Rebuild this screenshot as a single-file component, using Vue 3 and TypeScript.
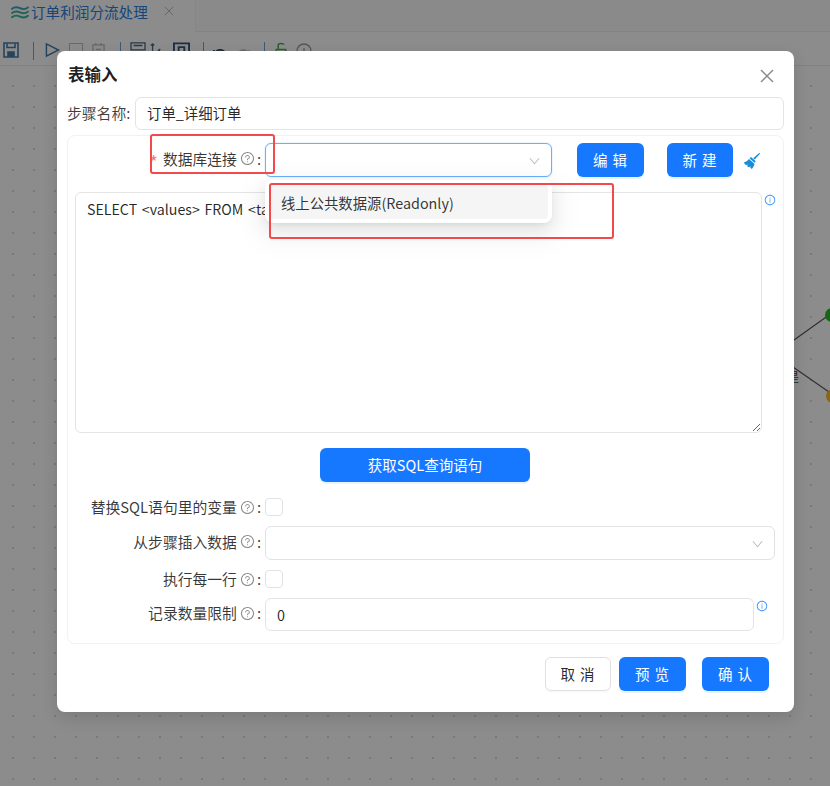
<script setup lang="ts">
const help = [
  'M512 64C264.6 64 64 264.6 64 512s200.6 448 448 448 448-200.6 448-448S759.4 64 512 64zm0 820c-205.4 0-372-166.6-372-372s166.6-372 372-372 372 166.6 372 372-166.6 372-372 372z',
  'M623.6 316.7C593.6 290.4 554 276 512 276s-81.6 14.5-111.6 40.7C369.2 344 352 380.7 352 420v7.6c0 4.4 3.6 8 8 8h48c4.4 0 8-3.6 8-8V420c0-44.1 43.1-80 96-80s96 35.9 96 80c0 31.1-22 59.6-56.1 72.7-21.2 8.1-39.2 22.3-52.1 40.9-13.1 19-19.9 41.8-19.9 64.9V620c0 4.4 3.6 8 8 8h48c4.4 0 8-3.6 8-8v-22.7a48.3 48.3 0 0 1 30.9-44.8c59-22.7 97.1-74.7 97.1-132.5.1-39.3-17.1-76-48.3-103.3zM472 732a40 40 0 1 0 80 0 40 40 0 1 0-80 0z'
].join(' ')
const circle = 'M512 64C264.6 64 64 264.6 64 512s200.6 448 448 448 448-200.6 448-448S759.4 64 512 64zm0 820c-205.4 0-372-166.6-372-372s166.6-372 372-372 372 166.6 372 372-166.6 372-372 372z'
const info = circle + ' M464 336a48 48 0 1 0 96 0 48 48 0 1 0-96 0zm72 112h-48c-4.4 0-8 3.6-8 8v272c0 4.4 3.6 8 8 8h48c4.4 0 8-3.6 8-8V456c0-4.4-3.6-8-8-8z'
const sql = 'SELECT <values> FROM <table name> WHERE <conditions>'
</script>

<template>
  <div class="page">
    <header class="tabs">
      <svg class="logo" viewBox="0 0 18 13" fill="none" stroke-width="1.900" stroke-linecap="round">
        <path d="M1 2.800C3.500 .8 6 .8 9 2.200s5.500 1.400 8-.8" stroke="#35a8c0" />
        <path d="M1 7C3.500 5 6 5 9 6.400s5.500 1.400 8-.8" stroke="#35b8a0" />
        <path d="M1 11.200C3.500 9.200 6 9.200 9 10.600s5.500 1.400 8-.8" stroke="#35b8a0" />
      </svg>
      <span class="tab-title">订单利润分流处理</span>
      <svg class="tab-close" viewBox="0 0 12 12" stroke="#bdbdbd" stroke-width="1.2"><path d="M1 1l10 10M11 1L1 11" /></svg>
      <div class="tab-rest"></div>
    </header>
    <nav class="toolbar">
      <svg class="tool save" viewBox="0 0 16 16" fill="none" stroke="#4a7ca8" stroke-width="1.6">
        <path d="M1 1h14v14H1z" /><path d="M4 1.500v4h8v-4" /><path d="M5 15v-5h6v5" fill="#4a7ca8" />
      </svg>
      <i class="sep"></i>
      <svg class="tool play" viewBox="0 0 16 16" fill="none" stroke="#3f78a8" stroke-width="1.5"><path d="M1.500 1.500v13l13-6.500z" /></svg>
      <span class="box"></span>
      <svg class="tool cal" viewBox="0 0 14 16" fill="none" stroke="#bdbdbd" stroke-width="1.4"><path d="M1 3h12v12H1zM4 1v3M10 1v3M4 8h6" /></svg>
      <i class="sep"></i>
      <svg class="tool wide" viewBox="0 0 18 16" fill="none" stroke="#4a6a88" stroke-width="1.5"><path d="M1 1h16v8H1zM4 4h10" /></svg>
      <svg class="tool slim" viewBox="0 0 14 16" fill="none" stroke="#4a6a88" stroke-width="1.5"><path d="M3 15V2M1 4l2-2 2 2M11 15V8M9 10l3-2" /></svg>
      <svg class="tool wide2" viewBox="0 0 18 16" fill="none" stroke="#38587a" stroke-width="2"><path d="M1 1h16v14H1zM6 12V5h6v7" /></svg>
      <i class="sep sep-b"></i>
      <svg class="tool undo" viewBox="0 0 16 16" fill="none" stroke="#3a4a5a" stroke-width="1.8"><path d="M2 10c2-6 9-7 12-1M2 5v5h5" /></svg>
      <svg class="tool redo" viewBox="0 0 16 16" fill="none" stroke="#bdbdbd" stroke-width="1.8"><path d="M14 10C12 4 5 3 2 9M14 5v5H9" /></svg>
      <i class="sep sep-c"></i>
      <svg class="tool lock" viewBox="0 0 12 16" fill="none" stroke="#4caf50" stroke-width="1.6"><path d="M1 8h10v7H1zM3 8V3c0-2 6-2 6 0" /></svg>
      <svg class="tool shape" viewBox="0 0 16 16" fill="none" stroke="#9a9a9a" stroke-width="1.3"><circle cx="8" cy="8" r="7" /><path d="M8 5v6" /></svg>
    </nav>
    <main class="canvas">
      <svg class="edges" width="830" height="786" viewBox="0 0 830 786" fill="none">
        <path d="M780 350L829 315M780 358L829 392" stroke="#555" stroke-width="1.1" />
        <circle cx="832" cy="315" r="7" fill="#1fbf1f" />
        <circle cx="833" cy="396" r="7" fill="#ffb81c" />
      </svg>
      <span class="edge-label">是</span>
    </main>

    <div class="mask"></div>

    <section class="modal">
      <div class="modal-head">
        <h2>表输入</h2>
        <svg class="close" viewBox="0 0 14 14" stroke="#8c8c8c" stroke-width="1.5"><path d="M1 1l12 12M13 1L1 13" /></svg>
      </div>
      <div class="name-row">
        <label>步骤名称:</label>
        <input class="field name" value="订单_详细订单" />
      </div>
      <div class="panel">
        <div class="row conn">
          <div class="label"><em>*</em>数据库连接<svg class="help" viewBox="0 0 1024 1024"><path :d="help" /></svg>:</div>
          <div class="select focus">
            <svg class="chev" viewBox="0 0 12 8" fill="none" stroke="#bfbfbf" stroke-width="1.2"><path d="M1 1l5 6 5-6" /></svg>
            <div class="dropdown"><div class="option">线上公共数据源(Readonly)</div></div>
          </div>
          <button class="btn primary edit">编 辑</button>
          <button class="btn primary create">新 建</button>
          <svg class="broom" viewBox="0 0 16 16" fill="#1a8cd8">
            <path d="M15.500.8l.5.8-5 5.400-1.400-1.200z" />
            <path d="M7.500 4.800l4.500 4-1 1.400-4.800-4.200z" />
            <path d="M5.600 6.600l5.200 4.400c-.4 2-1.400 3.800-2.600 5l-1.400-1.400.2-1.400-1.400 1.400-1.800-1.400.8-1.600-1.800.8-2.200-2.600c2-.4 3.800-1.600 5-3.200z" />
          </svg>
        </div>
        <div class="sql-row">
          <textarea class="sql" :value="sql"></textarea>
          <svg class="info" viewBox="0 0 1024 1024"><path :d="info" /></svg>
        </div>
        <div class="get-row"><button class="btn primary get">获取SQL查询语句</button></div>
        <div class="row check-row first">
          <div class="label">替换SQL语句里的变量<svg class="help" viewBox="0 0 1024 1024"><path :d="help" /></svg>:</div>
          <span class="check"></span>
        </div>
        <div class="row spaced">
          <div class="label">从步骤插入数据<svg class="help" viewBox="0 0 1024 1024"><path :d="help" /></svg>:</div>
          <div class="select wide-select">
            <svg class="chev" viewBox="0 0 12 8" fill="none" stroke="#bfbfbf" stroke-width="1.2"><path d="M1 1l5 6 5-6" /></svg>
          </div>
        </div>
        <div class="row spaced check-row">
          <div class="label">执行每一行<svg class="help" viewBox="0 0 1024 1024"><path :d="help" /></svg>:</div>
          <span class="check"></span>
        </div>
        <div class="row spaced">
          <div class="label">记录数量限制<svg class="help" viewBox="0 0 1024 1024"><path :d="help" /></svg>:</div>
          <input class="field limit" value="0" />
          <svg class="info info-b" viewBox="0 0 1024 1024"><path :d="info" /></svg>
        </div>
      </div>
      <footer class="foot">
        <button class="btn cancel">取 消</button>
        <button class="btn primary preview">预 览</button>
        <button class="btn primary confirm">确 认</button>
      </footer>
    </section>

    <div class="mark mark-a"></div>
    <div class="mark mark-b"></div>
  </div>
</template>

<style>
html, body { margin: 0; background: #fff; }
</style>

<style scoped>
.page {
  position: relative;
  width: 830px;
  height: 786px;
  overflow: hidden;
  display: flex;
  flex-direction: column;
  font-family: "Noto Sans CJK SC", "Noto Sans", sans-serif;
  font-size: 14px;
  color: rgba(0, 0, 0, .85);
}
.tabs {
  height: 32px;
  display: flex;
  align-items: center;
  padding: 0 0 8px 11px;
  box-sizing: border-box;
  flex: none;
}
.logo { width: 18px; height: 13px; margin-right: 2px; flex: none; }
.tab-title { font-size: 14.6px; color: #2a7fe0; white-space: nowrap; line-height: 24px; }
.tab-close { width: 10px; height: 10px; margin-left: 16px; margin-top: -2px; flex: none; }
.tab-rest { flex: 1; align-self: stretch; margin: 0 0 -8px 21px; background: #fbfbfb; border-left: 1px solid #f2f2f2; border-bottom: 1px solid #f0f0f0; }
.toolbar {
  height: 34px;
  flex: none;
  display: flex;
  align-items: flex-start;
  box-sizing: border-box;
  padding: 10px 0 0 3px;
  background: #fff;
  border-bottom: 1px solid #ececec;
  box-shadow: 0 1px 2px rgba(0, 0, 0, .06);
}
.tool { flex: none; }
.save { width: 16px; height: 16px; }
.sep { width: 1px; height: 18px; margin: 0 0 0 14px; background: #6aa7dc; flex: none; }
.play { width: 15px; height: 16px; margin-left: 11px; }
.box { width: 14px; height: 15px; margin: 1px 0 0 9px; border: 1.5px solid #bdbdbd; box-sizing: border-box; flex: none; }
.cal { width: 13px; height: 15px; margin-left: 9px; }
.toolbar .cal + .sep { margin-left: 15px; }
.wide { width: 18px; height: 14px; margin-left: 8px; }
.slim { width: 12px; height: 14px; margin-left: 3px; }
.wide2 { width: 17px; height: 16px; margin-left: 11px; }
.sep-b { margin-left: 13px; }
.undo { width: 16px; height: 16px; margin: 3px 0 0 8px; }
.redo { width: 15px; height: 16px; margin: 3px 0 0 8px; }
.sep-c { margin-left: 13px; }
.lock { width: 12px; height: 15px; margin-left: 10px; }
.shape { width: 16px; height: 16px; margin: 1px 0 0 9px; }
.canvas {
  flex: 1;
  background-color: #fff;
  background-image: radial-gradient(circle at 1px 1px, #dcdcdc 1px, transparent 1.2px);
  background-size: 21px 21px;
  background-position: 12px 19px;
}
.edges { position: absolute; left: 0; top: 0; }
.edge-label { position: absolute; left: 787px; top: 368px; font-size: 12px; line-height: 18px; color: #444; }
.mask { position: absolute; inset: 0; background: rgba(0, 0, 0, .45); }

.modal {
  position: absolute;
  left: 57px;
  top: 51px;
  width: 737px;
  height: 661px;
  box-sizing: border-box;
  padding: 0 10px;
  background: #fff;
  border-radius: 8px;
  box-shadow: 0 6px 16px rgba(0, 0, 0, .12);
  display: flex;
  flex-direction: column;
}
.modal-head { height: 46px; display: flex; align-items: center; justify-content: space-between; flex: none; }
.modal-head h2 { margin: 0 0 0 1px; font-size: 16.5px; font-weight: 700; line-height: 24px; color: rgba(0, 0, 0, .88); }
.close { width: 14px; height: 14px; margin-right: 10px; margin-top: 4px; }
.name-row { display: flex; align-items: center; gap: 3px; flex: none; }
.name-row label { font-size: 14.8px; white-space: nowrap; width: 65px; padding-bottom: 2px; color: rgba(0, 0, 0, .75); }
.field {
  height: 33px;
  box-sizing: border-box;
  flex: 1;
  min-width: 0;
  padding: 0 11px;
  border: 1px solid #e4e4e4;
  border-radius: 6px;
  font: inherit;
  font-size: 14.4px;
  color: rgba(0, 0, 0, .85);
  outline: none;
  background: #fff;
}
.name { padding-bottom: 2px; }
.panel {
  margin-top: 5px;
  height: 509px;
  box-sizing: border-box;
  padding: 7px 7px 0;
  border: 1px solid #f2f2f2;
  border-radius: 8px;
  flex: none;
}
.row { display: flex; align-items: center; }
.label {
  width: 190px;
  flex: none;
  box-sizing: border-box;
  display: flex;
  align-items: center;
  justify-content: flex-end;
  padding: 0 4px 3px 0;
  font-size: 14.8px;
  line-height: 20px;
  white-space: nowrap;
  color: rgba(0, 0, 0, .78);
}
.check-row .label { padding-bottom: 0; }
.label em { font-style: normal; color: #ff7875; margin: 5px 5px 0 0; font-size: 18px; line-height: 20px; }
.help { width: 15px; height: 15px; margin: 0 2px 0 3px; fill: #8c8c8c; flex: none; }
.select {
  position: relative;
  width: 287px;
  height: 34px;
  box-sizing: border-box;
  flex: none;
  background: #fff;
  border: 1px solid #e2e2e2;
  border-radius: 6px;
}
.select.focus { border-color: #69b1ff; box-shadow: 0 0 0 1px rgba(5, 145, 255, .08); }
.wide-select { width: 510px; }
.chev { position: absolute; right: 11px; top: 13px; width: 11px; height: 8px; }
.dropdown {
  position: absolute;
  left: -1px;
  right: -1px;
  top: 36px;
  height: 43px;
  box-sizing: border-box;
  padding: 5px 4px 4px;
  background: #fff;
  border-radius: 8px;
  box-shadow: 0 6px 16px rgba(0, 0, 0, .08), 0 3px 6px -4px rgba(0, 0, 0, .12), 0 9px 28px 8px rgba(0, 0, 0, .05);
  z-index: 2;
}
.option {
  height: 34px;
  line-height: 36px;
  padding: 0 12px;
  background: #f5f5f5;
  border-radius: 4px;
  font-size: 14.35px;
  color: rgba(0, 0, 0, .8);
}
.btn {
  height: 34px;
  box-sizing: border-box;
  border: 0;
  border-radius: 6px;
  padding: 0 0 1px;
  font: inherit;
  font-size: 14.5px;
  flex: none;
}
.primary { background: #1677ff; color: #fff; box-shadow: 0 2px 0 rgba(5, 145, 255, .1); }
.edit { width: 67px; margin-left: 25px; letter-spacing: 1px; }
.create { width: 66px; margin-left: 23px; letter-spacing: 1px; }
.broom { width: 17px; height: 17px; margin-left: 10px; flex: none; }
.sql-row { display: flex; align-items: flex-start; margin-top: 15px; }
.sql {
  width: 687px;
  height: 241px;
  box-sizing: border-box;
  padding: 5px 11px;
  border: 1px solid #e4e4e4;
  border-radius: 6px;
  font: inherit;
  font-size: 14.2px;
  word-spacing: 1.5px;
  line-height: 22px;
  color: rgba(0, 0, 0, .85);
  outline: none;
  flex: none;
}
.info { width: 12px; height: 12px; margin: 2px 0 0 2px; fill: #4096ff; flex: none; }
.info-b { margin: -17px 0 0 2px; }
.get-row { display: flex; justify-content: center; margin-top: 15px; padding-right: 1px; }
.get { width: 210px; }
.check-row { height: 18px; }
.first { margin-top: 16px; }
.spaced { margin-top: 10px; }
.check { width: 18px; height: 18px; box-sizing: border-box; background: #fff; border: 1px solid #e2e2e2; border-radius: 4px; flex: none; }
.limit { flex: none; width: 489px; }
.foot { display: flex; margin-top: 13px; padding-left: 478px; flex: none; }
.cancel { width: 66px; background: #fff; border: 1px solid #e0e0e0; color: rgba(0, 0, 0, .85); letter-spacing: 1px; box-shadow: 0 2px 0 rgba(0, 0, 0, .02); }
.preview { width: 67px; margin-left: 8px; letter-spacing: 1px; }
.confirm { width: 67px; margin-left: 16px; letter-spacing: 1px; }
.mark { position: absolute; border: 2px solid #f5484a; border-radius: 3px; box-sizing: border-box; z-index: 5; }
.mark-a { left: 150px; top: 134px; width: 125px; height: 40px; }
.mark-b { left: 269px; top: 183px; width: 345px; height: 56px; }
</style>
